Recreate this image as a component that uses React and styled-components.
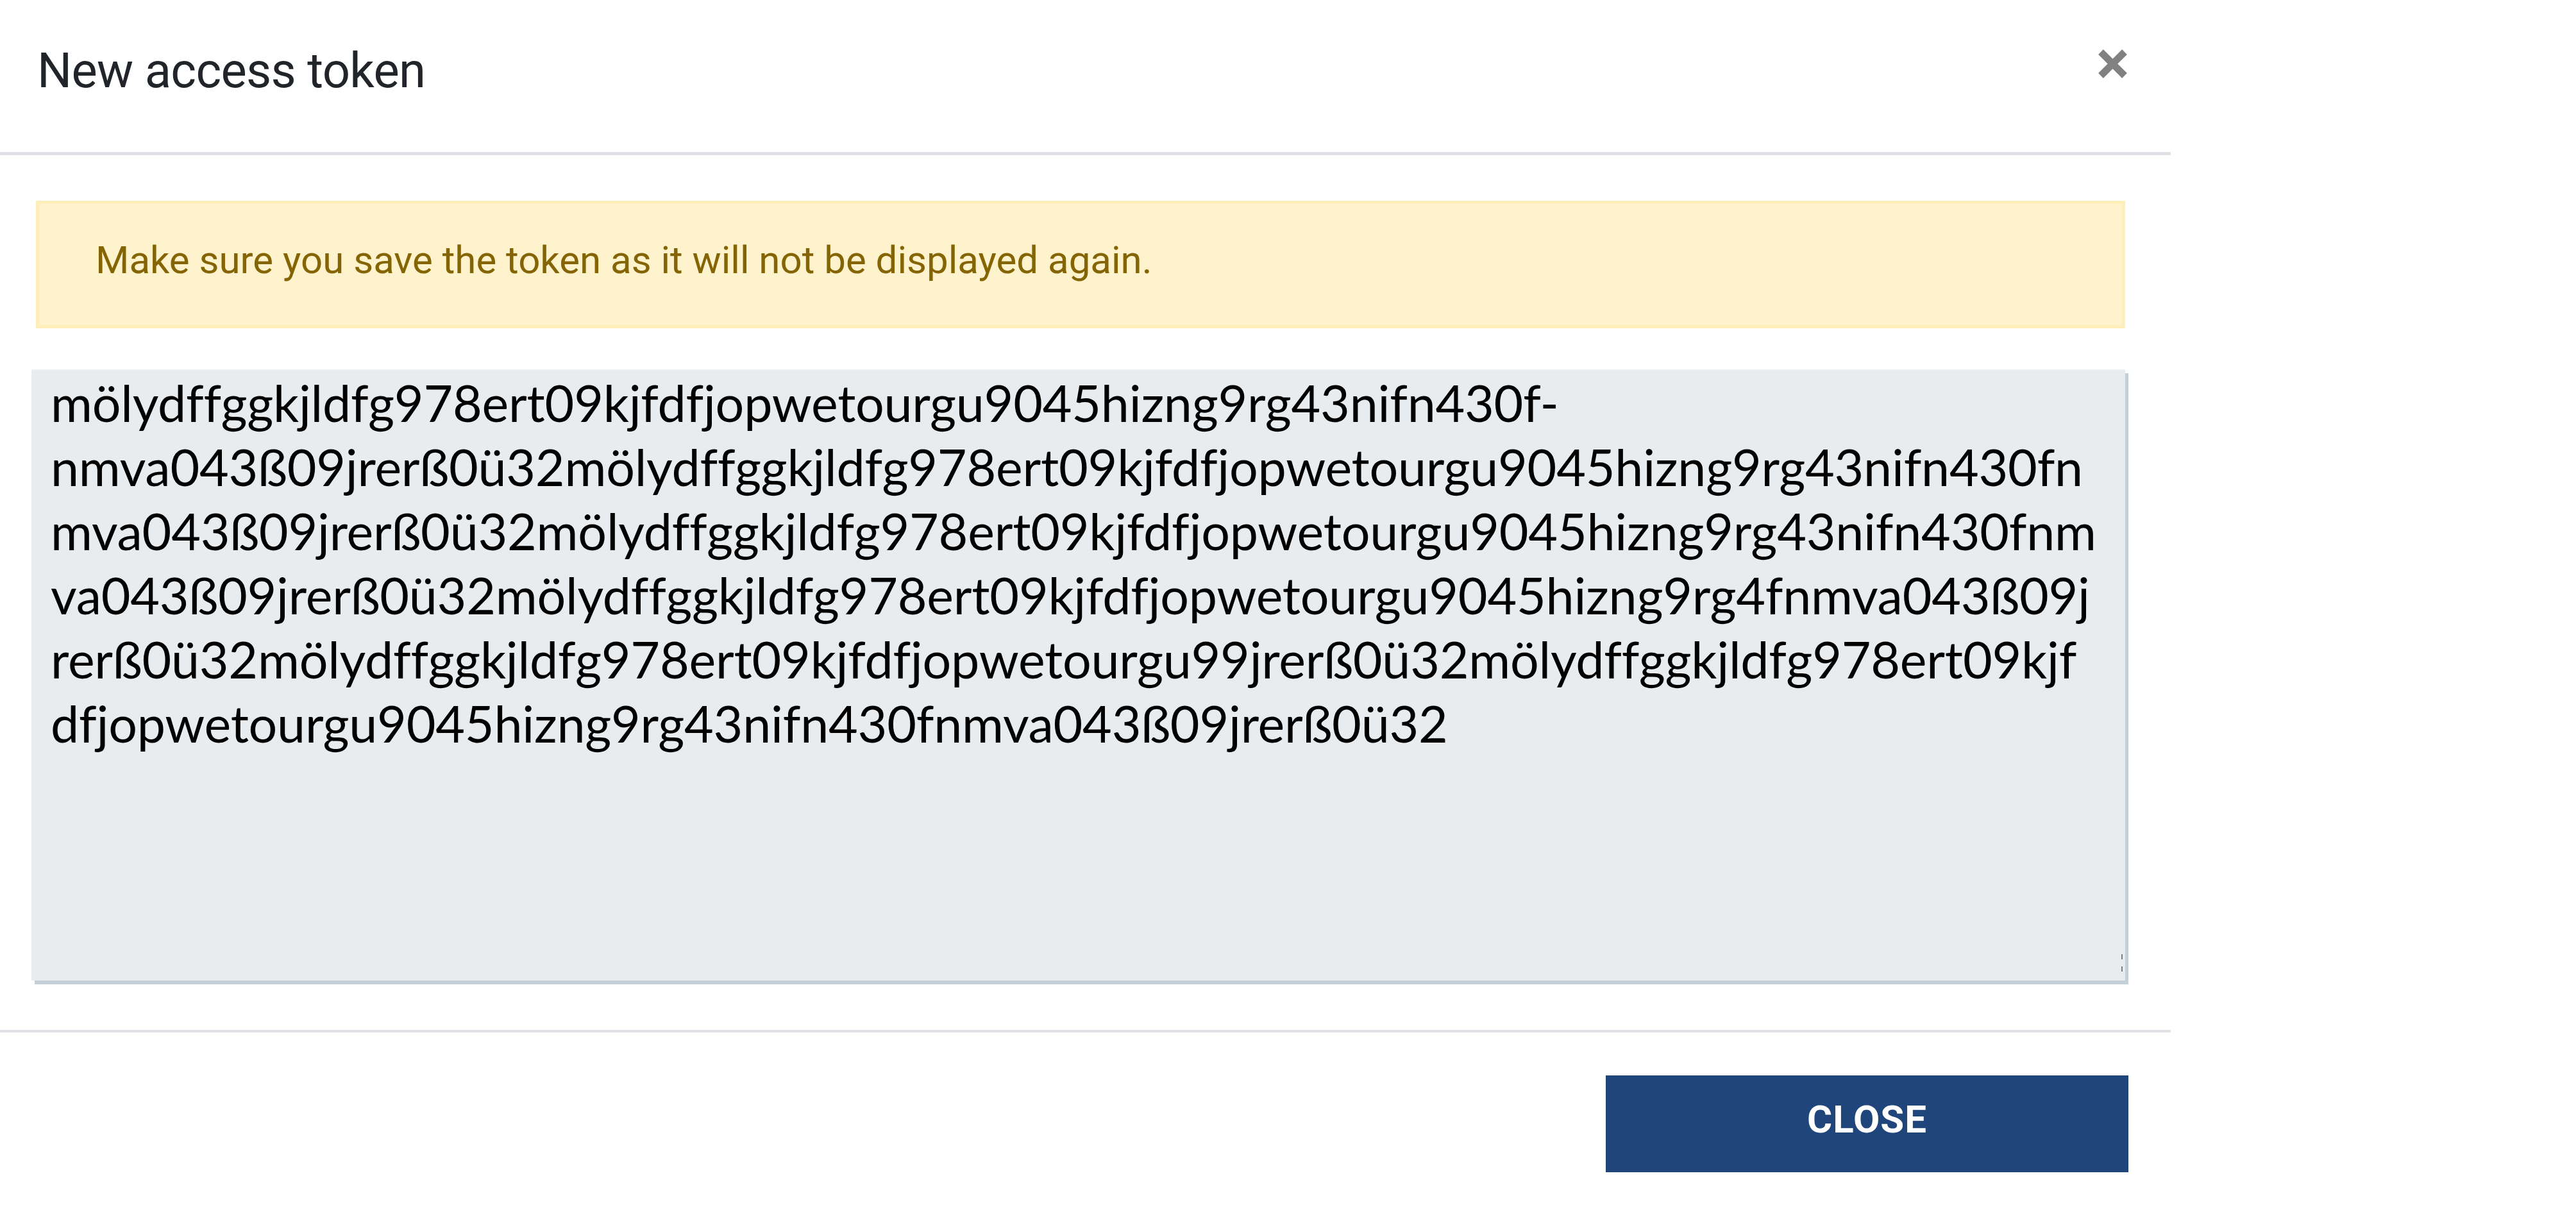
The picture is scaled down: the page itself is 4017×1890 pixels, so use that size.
import React from 'react'
import styled, { createGlobalStyle } from 'styled-components'

const GlobalStyle = createGlobalStyle`
  html, body {
    margin: 0;
    padding: 0;
    background: #fff;
  }
  body {
    font-family: Roboto, "Liberation Sans", sans-serif;
  }
`

const Modal = styled.div`
  width: 3385px;
  background: #fff;
`

const Header = styled.div`
  display: flex;
  justify-content: space-between;
  align-items: flex-start;
  height: 237px;
  padding: 0 67px 0 58px;
  border-bottom: 5px solid #dee2e6;
  box-sizing: content-box;
`

const Title = styled.h5`
  margin: 63px 0 0;
  font-family: Roboto, sans-serif;
  font-size: 76px;
  line-height: 94px;
  font-weight: 400;
  letter-spacing: -0.7px;
  color: #212529;
`

const CloseIcon = styled.button`
  margin-top: 76px;
  padding: 0;
  width: 47px;
  height: 47px;
  border: none;
  background: transparent;
  cursor: pointer;
  display: flex;
`

const Body = styled.div`
  display: flex;
  flex-direction: column;
  gap: 64px;
  padding: 71px 71px 77px 49px;
`

const Alert = styled.div`
  margin-left: 7px;
  height: 199px;
  box-sizing: border-box;
  padding: 0 80px 14px 88px;
  display: flex;
  align-items: center;
  background: #fff3cd;
  border: 5px solid #ffeeba;
  color: #856404;
  font-family: Roboto, sans-serif;
  font-size: 60px;
`

const TokenBox = styled.div`
  position: relative;
  height: 953px;
  box-sizing: border-box;
  padding: 0 20px 0 30px;
  background: #e8ecef;
  border-top: 2px solid #eef1f3;
  box-shadow: 5px 6px 0 #c4d0d8;
  color: #000;
  font-family: Lato, "Open Sans", sans-serif;
  font-size: 79px;
  letter-spacing: -0.25px;
  line-height: 100px;
  white-space: pre;
  overflow: hidden;
`

const TokenLine = styled.div``

const Grip = styled.span`
  position: absolute;
  right: 4px;
  bottom: ${(p) => p.bottom}px;
  width: 2px;
  height: 8px;
  background: #7a7f84;
`

const Footer = styled.div`
  display: flex;
  justify-content: flex-end;
  border-top: 4px solid #dee2e6;
  padding: 67px 66px 62px 0;
`

const CloseButton = styled.button`
  width: 815px;
  height: 151px;
  padding: 0 0 14px;
  border: none;
  border-radius: 0;
  background: #1f457a;
  color: #fff;
  font-family: Roboto, sans-serif;
  font-weight: 700;
  font-size: 60px;
  letter-spacing: 1px;
  cursor: pointer;
`

const tokenLines = [
  'mölydffggkjldfg978ert09kjfdfjopwetourgu9045hizng9rg43nifn430f-',
  'nmva043ß09jrerß0ü32mölydffggkjldfg978ert09kjfdfjopwetourgu9045hizng9rg43nifn430fn',
  'mva043ß09jrerß0ü32mölydffggkjldfg978ert09kjfdfjopwetourgu9045hizng9rg43nifn430fnm',
  'va043ß09jrerß0ü32mölydffggkjldfg978ert09kjfdfjopwetourgu9045hizng9rg4fnmva043ß09j',
  'rerß0ü32mölydffggkjldfg978ert09kjfdfjopwetourgu99jrerß0ü32mölydffggkjldfg978ert09kjf',
  'dfjopwetourgu9045hizng9rg43nifn430fnmva043ß09jrerß0ü32',
]

export default function App() {
  return (
    <>
      <GlobalStyle />
      <Modal>
        <Header>
          <Title>New access token</Title>
          <CloseIcon aria-label='Close'>
            <svg width='47' height='47' viewBox='0 0 47 47'>
              <path
                d='M5 5 L42 42 M42 5 L5 42'
                stroke='#818181'
                strokeWidth='11'
                fill='none'
              />
            </svg>
          </CloseIcon>
        </Header>
        <Body>
          <Alert>Make sure you save the token as it will not be displayed again.</Alert>
          <TokenBox>
            {tokenLines.map((line) => (
              <TokenLine key={line}>{line}</TokenLine>
            ))}
            <Grip bottom={33} />
            <Grip bottom={14} />
          </TokenBox>
        </Body>
        <Footer>
          <CloseButton>CLOSE</CloseButton>
        </Footer>
      </Modal>
    </>
  )
}
